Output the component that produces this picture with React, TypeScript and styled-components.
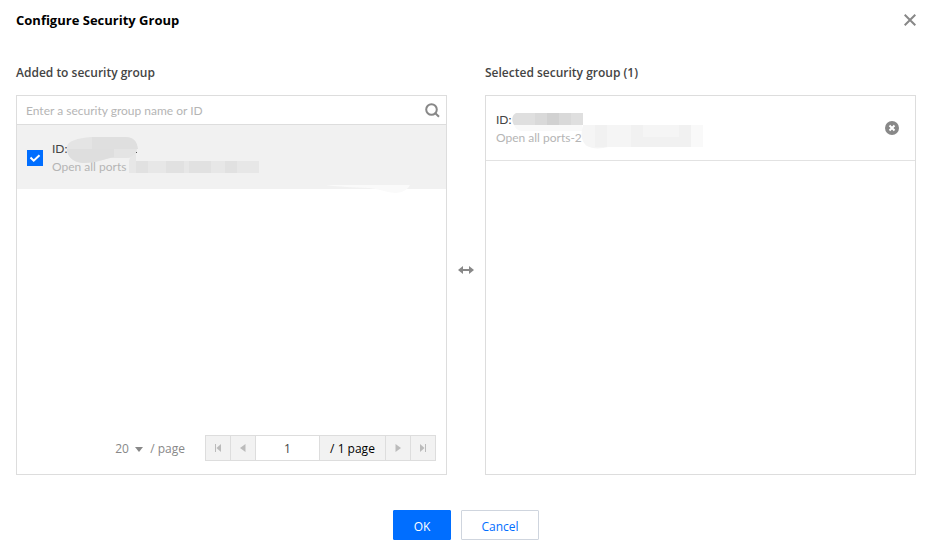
import React, { useState } from "react";
import styled, { createGlobalStyle } from "styled-components";

const GlobalStyle = createGlobalStyle`
  * { box-sizing: border-box; }
  body {
    margin: 0;
    background: #fff;
    color: #444;
    font: 12px/18px "Segoe UI", "Open Sans", "Noto Sans", sans-serif;
  }
  button, input, select { font: inherit; }
  button { cursor: pointer; }
`;

const listFont = `"Segoe UI", Lato, "Open Sans", sans-serif`;

const Dialog = styled.section`
  padding: 10px 15px 19px 16px;
`;

const Header = styled.header`
  display: flex;
  align-items: center;
  justify-content: space-between;
  height: 20px;
`;

const Title = styled.h1`
  margin: 0;
  color: #000;
  font-size: 13px;
  line-height: 20px;
  font-weight: 700;
`;

const IconButton = styled.button`
  display: flex;
  padding: 0;
  border: 0;
  background: none;
  color: #888;
`;

const Transfer = styled.div`
  display: grid;
  grid-template-columns: 1fr 38px 1fr;
  margin-top: 34px;
`;

const Column = styled.section`
  display: flex;
  flex-direction: column;
  min-width: 0;
`;

const ColumnTitle = styled.h2`
  margin: 0 0 13px;
  color: #444;
  font-size: 12px;
  line-height: 18px;
  font-weight: 600;
`;

const Panel = styled.div`
  display: flex;
  flex: 1;
  flex-direction: column;
  min-height: 380px;
  border: 1px solid #ddd;
`;

const Search = styled.div`
  display: flex;
  align-items: center;
  height: 29px;
  padding: 0 6px 0 9px;
  border-bottom: 1px solid #ddd;
`;

const SearchInput = styled.input`
  flex: 1;
  min-width: 0;
  padding: 2px 0 0;
  border: 0;
  outline: 0;
  background: none;
  color: #444;
  font-family: ${listFont};
  &::placeholder { color: #b5b5b5; opacity: 1; }
`;

const Row = styled.div<{ $selected?: boolean }>`
  position: relative;
  display: flex;
  align-items: center;
  height: ${(p) => (p.$selected ? "64px" : "65px")};
  padding: ${(p) => (p.$selected ? "2px" : "0")} 16px 0 10px;
  background: ${(p) => (p.$selected ? "#f1f1f1" : "#fff")};
  border-bottom: ${(p) => (p.$selected ? "0" : "1px solid #e2e2e2")};
`;

const Option = styled.label`
  display: flex;
  align-items: center;
  gap: 9px;
`;

const CheckSlot = styled.span`
  display: grid;
  width: 16px;
  height: 16px;
  & > * { grid-area: 1 / 1; }
  svg { pointer-events: none; }
`;

const Checkbox = styled.input`
  appearance: none;
  width: 16px;
  height: 16px;
  margin: 0;
  border: 1px solid #bbb;
  background: #fff;
  &:checked { border-color: #006eff; background: #006eff; }
`;

const Lines = styled.span`
  display: flex;
  flex: 1;
  flex-direction: column;
  font-family: ${listFont};
`;

const SelectedLines = styled(Lines)`
  padding-top: 2px;
`;

const Muted = styled.span`
  color: #b5b5b5;
`;

const Redaction = styled.svg`
  position: absolute;
  top: 0;
  left: 0;
  pointer-events: none;
`;

const Middle = styled.div`
  display: flex;
  align-items: center;
  justify-content: center;
`;

const Footer = styled.div`
  display: flex;
  align-items: center;
  justify-content: flex-end;
  margin-top: auto;
  padding: 0 10px 13px;
  color: #888;
`;

const PageSize = styled.label`
  display: flex;
  align-items: center;
  margin-right: 20px;
  padding-top: 2px;
`;

const SizeSelect = styled.select`
  appearance: none;
  width: 17px;
  padding: 0;
  border: 0;
  background: none;
  color: #888;
`;

const Caret = styled.svg`
  margin: 0 7px 0 3px;
`;

const Pager = styled.div`
  display: flex;
  height: 26px;
  border: 1px solid #ddd;
  background: #f2f2f2;
  && > * + * { border-left: 1px solid #ddd; }
`;

const PagerButton = styled.button`
  display: flex;
  align-items: center;
  justify-content: center;
  width: 25px;
  padding: 0;
  border: 0;
  background: none;
  color: #bbb;
  &:first-child { width: 24px; }
`;

const PageInput = styled.input`
  width: 64px;
  padding: 2px 0 0;
  border: 0;
  border-radius: 0;
  background: #fff;
  color: #444;
  text-align: center;
`;

const PageTotal = styled.span`
  width: 66px;
  color: #000;
  line-height: 26px;
  text-align: center;
`;

const Actions = styled.footer`
  display: flex;
  justify-content: center;
  gap: 10px;
  margin-top: 35px;
`;

const ActionButton = styled.button<{ $primary?: boolean }>`
  min-width: ${(p) => (p.$primary ? "58px" : "78px")};
  height: 30px;
  padding: 3px 16px 0;
  border: 1px solid ${(p) => (p.$primary ? "#006eff" : "#cfd5de")};
  background: ${(p) => (p.$primary ? "#006eff" : "#fff")};
  color: ${(p) => (p.$primary ? "#fff" : "#006eff")};
  border-radius: 1px;
`;

type Direction = "first" | "previous" | "next" | "last";

function PagerIcon({ kind }: { kind: Direction }) {
  const flip = kind === "next" || kind === "last";
  const bar = kind === "first" || kind === "last";
  return (
    <svg width="8" height="8" viewBox="0 0 8 8" fill="currentColor" aria-hidden="true">
      <g transform={flip ? "translate(8 0) scale(-1 1)" : undefined}>
        <path d={bar ? "M7 0v8L2.500 4z" : "M6.500 0v8L1 4z"} />
        {bar && <path d="M1 0h1v8H1z" />}
      </g>
    </svg>
  );
}

const pagerLabels: Record<Direction, string> = {
  first: "First page",
  previous: "Previous page",
  next: "Next page",
  last: "Last page",
};

function PagerStep({ kind }: { kind: Direction }) {
  return (
    <PagerButton type="button" aria-label={pagerLabels[kind]}>
      <PagerIcon kind={kind} />
    </PagerButton>
  );
}

function AddedRedaction() {
  return (
    <Redaction width="400" height="68" viewBox="0 0 400 68" aria-hidden="true">
      <path d="M50 22c0-6 11-9 24-10h33c9 0 13 4 13 10 0 7-2 11-10 11H93c-9 2-15 5-27 5-11-1-16-8-16-16z" fill="#e4e4e4" />
      <path d="M75 12h33c8 0 12 4 13 12H75z" fill="#dfdfdf" />
      <path d="M50 24h47v8c-9 2-19 6-31 6-11-1-16-7-16-14z" fill="#dedede" />
      <path d="M119 27h1v1h-1z" fill="#555" />
      <path d="M112 48V37c0-4 3-7 7-8v7h123v12H119z" fill="#e7e7e7" />
      <path d="M119 36h12v12h-12zM149 36h18v12h-18zM172 36h22v12h-22zM208 36h12v12h-12z" fill="#e1e1e1" />
      <path d="M309 60h84c-2 4-7 8-15 8-10-1-16-4-26-5-17-1-29-1-43-3z" fill="#fafafa" />
    </Redaction>
  );
}

function SelectedRedaction() {
  return (
    <Redaction width="220" height="64" viewBox="0 0 220 64" aria-hidden="true">
      <path d="M28 29h68v6H38c-6 0-8-2-10-6z" fill="#f9f9f9" />
      <path d="M30 17h67v12H28c-3-5-2-10 2-12z" fill="#dfdfdf" />
      <path d="M49 17h12v12H49zM73 17h12v12H73z" fill="#d9d9d9" />
      <path d="M61 17h12v12H61z" fill="#d1d1d1" />
      <path d="M97 29h120v22h-95c-7 2-16 2-21-1-5-4-7-10-4-21z" fill="#f5f5f5" />
      <path d="M109 29h12v22h-12zM145 29h12v22h-12zM193 29h12v22h-12zM157 41h48v10h-48z" fill="#f1f1f1" />
      <path d="M205 29h12v22h-12z" fill="#f9f9f9" />
    </Redaction>
  );
}

export default function App() {
  const [checked, setChecked] = useState(true);
  const [query, setQuery] = useState("");
  const [page, setPage] = useState("1");

  return (
    <>
      <GlobalStyle />
      <Dialog role="dialog" aria-labelledby="dialog-title">
        <Header>
          <Title id="dialog-title">Configure Security Group</Title>
          <IconButton type="button" aria-label="Close">
            <svg width="12" height="12" viewBox="0 0 12 12" stroke="currentColor" strokeWidth="2" aria-hidden="true">
              <path d="M.7.7l10.600 10.600M11.300.7.7 11.300" />
            </svg>
          </IconButton>
        </Header>

        <Transfer>
          <Column>
            <ColumnTitle>Added to security group</ColumnTitle>
            <Panel>
              <Search>
                <SearchInput
                  aria-label="Search security groups"
                  placeholder="Enter a security group name or ID"
                  value={query}
                  onChange={(e) => setQuery(e.target.value)}
                />
                <IconButton type="button" aria-label="Search">
                  <svg width="15" height="15" viewBox="0 0 15 15" fill="none" stroke="currentColor" strokeWidth="2" aria-hidden="true">
                    <circle cx="6.500" cy="6.500" r="5.300" />
                    <path d="M9.800 9.800l4.200 4" />
                  </svg>
                </IconButton>
              </Search>
              <Row $selected>
                <Option>
                  <CheckSlot>
                    <Checkbox type="checkbox" checked={checked} onChange={(e) => setChecked(e.target.checked)} />
                    <svg width="16" height="16" viewBox="0 0 16 16" fill="none" stroke="#fff" strokeWidth="2" aria-hidden="true">
                      <path d="M3.500 7.500l3.200 3.200 5.800-5.500" />
                    </svg>
                  </CheckSlot>
                  <Lines>
                    <span>ID:</span>
                    <Muted>Open all ports</Muted>
                  </Lines>
                </Option>
                <AddedRedaction />
              </Row>
              <Footer>
                <PageSize>
                  <SizeSelect aria-label="Rows per page" defaultValue="20">
                    <option>20</option>
                    <option>50</option>
                  </SizeSelect>
                  <Caret width="8" height="5" viewBox="0 0 8 5" fill="#888" aria-hidden="true">
                    <path d="M0 0h8L4 5z" />
                  </Caret>
                  <span>/ page</span>
                </PageSize>
                <Pager>
                  <PagerStep kind="first" />
                  <PagerStep kind="previous" />
                  <PageInput aria-label="Page number" value={page} onChange={(e) => setPage(e.target.value)} />
                  <PageTotal>/ 1 page</PageTotal>
                  <PagerStep kind="next" />
                  <PagerStep kind="last" />
                </Pager>
              </Footer>
            </Panel>
          </Column>

          <Middle>
            <svg width="16" height="8" viewBox="0 0 16 8" fill="#888" aria-hidden="true">
              <path d="M0 4l5-4v3h6V0l5 4-5 4V5H5v3z" />
            </svg>
          </Middle>

          <Column>
            <ColumnTitle>Selected security group (1)</ColumnTitle>
            <Panel>
              <Row>
                <SelectedLines>
                  <span>ID:</span>
                  <Muted>Open all ports-2</Muted>
                </SelectedLines>
                <SelectedRedaction />
                <IconButton type="button" aria-label="Remove">
                  <svg width="14" height="14" viewBox="0 0 14 14" aria-hidden="true">
                    <circle cx="7" cy="7" r="7" fill="currentColor" />
                    <path d="M4.500 4.500l5 5M9.500 4.500l-5 5" stroke="#fff" strokeWidth="2" />
                  </svg>
                </IconButton>
              </Row>
            </Panel>
          </Column>
        </Transfer>

        <Actions>
          <ActionButton type="button" $primary>OK</ActionButton>
          <ActionButton type="button">Cancel</ActionButton>
        </Actions>
      </Dialog>
    </>
  );
}
